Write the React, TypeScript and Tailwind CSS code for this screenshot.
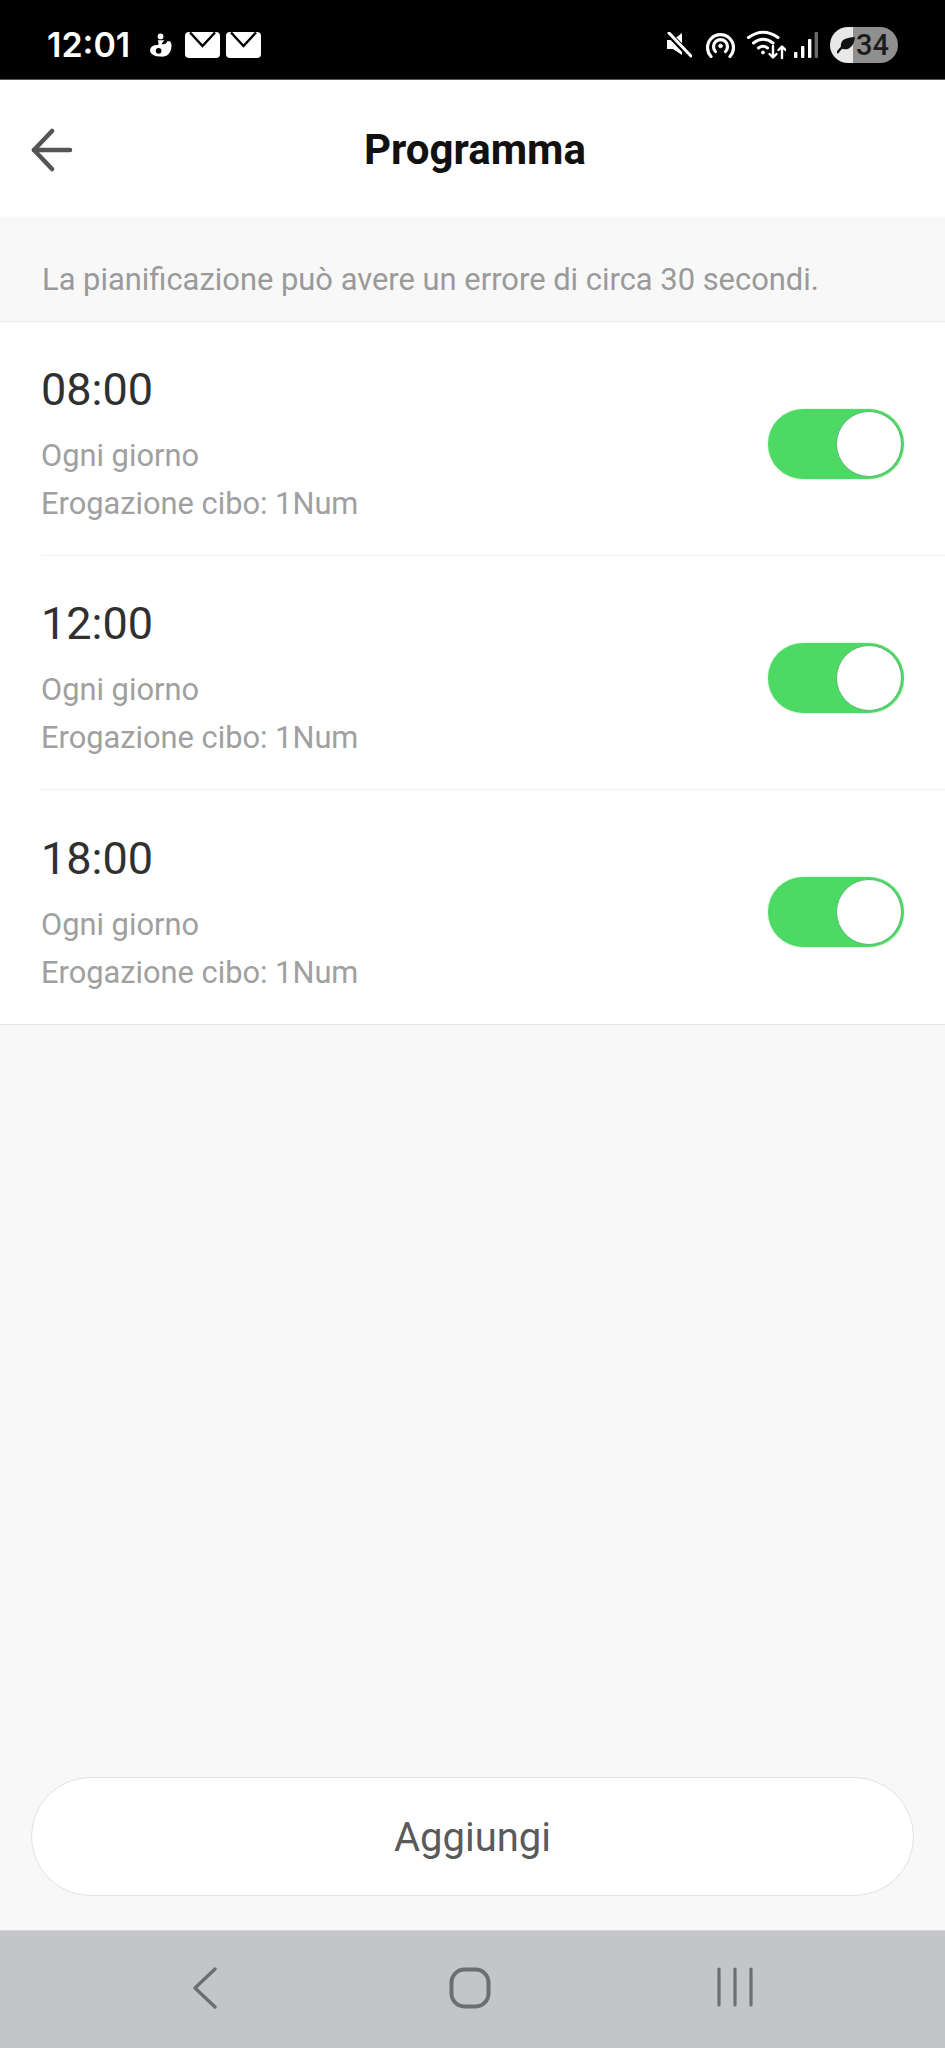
import React from 'react';

const SCHEDULES = ['08:00', '12:00', '18:00'];

function Toggle() {
  return (
    <div className="flex h-[70px] w-[136px] items-center justify-end rounded-full bg-[#4cd964] p-[2px] shadow-[0_0_2px_#4cd96480]">
      <div className="h-[66px] w-[66px] rounded-full border border-[#5cb874] bg-white" />
    </div>
  );
}

function Mail() {
  return (
    <svg width="35" height="26" viewBox="0 0 35 26">
      <rect width="35" height="26" rx="4" fill="#fff" />
      <path d="M5 0.5 L17.5 14 L30 0.5" fill="none" stroke="#000" strokeWidth="2.4" />
    </svg>
  );
}

function StatusBar() {
  return (
    <div className="flex h-[79px] items-center justify-between bg-black pl-[47px] pr-[47px] pt-[11px] [font-family:Inter,sans-serif]">
      <div className="flex items-center">
        <span className="w-[88px] text-[34px] font-semibold leading-none text-white">12:01</span>
        <svg className="ml-[15px]" width="23" height="26" viewBox="0 0 24 26" fill="#fff">
          <circle cx="11" cy="4" r="3" />
          <path d="M8 8 L15 8 L12 12 Q17 13 18 9 L21 9 Q24 14 21 20 Q18 26 11 25 Q1 25 0 19 Q0 13 8 13 Q10 12 8 8 Z" />
          <circle cx="9" cy="19" r="3" fill="#000" />
        </svg>
        <div className="ml-[12px] flex gap-[6px]">
          <Mail />
          <Mail />
        </div>
      </div>
      <div className="flex items-center">
        {/* mute */}
        <svg width="26" height="26" viewBox="0 0 26 26">
          <path d="M1 8 H7 L16 1 V23 L7 17 H1 Z" fill="#fff" />
          <path d="M3 2 L25 25" stroke="#000" strokeWidth="6" />
          <path d="M3 1 L25 24" stroke="#fff" strokeWidth="3" strokeLinecap="round" />
        </svg>
        {/* hotspot */}
        <svg className="ml-[14px]" width="29" height="26" viewBox="0 0 29 26" fill="none" stroke="#fff" strokeWidth="3.2" strokeLinecap="round">
          <path d="M5 24.5 A13 13 0 1 1 24 24.5" />
          <path d="M9.5 19.5 A7 7 0 1 1 19.5 19.5" />
          <circle cx="14.5" cy="14" r="1.8" fill="#fff" strokeWidth="1" />
        </svg>
        {/* wifi with arrows */}
        <svg className="ml-[12px]" width="39" height="30" viewBox="0 0 39 30" fill="none" stroke="#fff" strokeWidth="3" strokeLinecap="round" strokeLinejoin="round">
          <path d="M1.5 7.5 Q16 -3 31 7.5" />
          <path d="M6.5 13 Q16 5.5 26 13" />
          <path d="M11.5 18 Q16 14.5 20.5 18" />
          <circle cx="16" cy="22.5" r="1.5" fill="#fff" strokeWidth="1" />
          <path d="M26 16 V27 M22.5 24 L26 27.5 L29.5 24" strokeWidth="2.4" />
          <path d="M35 28 V17 M31.5 20 L35 16.5 L38.5 20" strokeWidth="2.4" />
        </svg>
        {/* signal */}
        <svg className="ml-[8px]" width="24" height="26" viewBox="0 0 24 26">
          <rect x="0" y="20" width="3.4" height="6" rx="1" fill="#fff" />
          <rect x="7" y="14" width="3.4" height="12" rx="1" fill="#fff" />
          <rect x="14" y="7" width="3.4" height="19" rx="1" fill="#fff" />
          <rect x="20.6" y="0" width="3.4" height="26" rx="1" fill="#6b6b6b" />
        </svg>
        {/* battery */}
        <div className="ml-[12px] flex h-[36px] w-[68px] items-center overflow-hidden rounded-full bg-[linear-gradient(90deg,#e8e8e8_0,#e8e8e8_23px,#8f8f8f_23px,#8f8f8f_100%)] [font-family:Roboto,sans-serif]">
          <svg className="ml-[7px] shrink-0" width="18" height="20" viewBox="0 0 18 20">
            <path d="M18 2 Q17 11 11 14 Q6 15 4 13 Q3 6 8 4 Q13 2 18 2 Z" fill="#111" />
            <path d="M0 18 Q5 12 7 10" stroke="#111" strokeWidth="2.4" fill="none" />
          </svg>
          <span className="ml-[1px] text-[29px] font-medium leading-none text-[#1c1c1c]">34</span>
        </div>
      </div>
    </div>
  );
}

function ScheduleRow({ time, last }: { time: string; last: boolean }) {
  return (
    <div className="flex h-[234px] pl-[41px]">
      <div className={last ? 'flex flex-1 items-center justify-between pr-[41px] pt-[10px]' : 'flex flex-1 items-center justify-between border-b border-[#f1f1f1] pr-[41px] pt-[10px]'}>
        <div className="pt-[5px]">
          <div className="text-[45px] leading-[52px] text-[#303030]">{time}</div>
          <div className="mt-[16px] text-[30.8px] leading-[48px] text-[#a0a0a0]">Ogni giorno</div>
          <div className="text-[30.8px] leading-[48px] text-[#a0a0a0]">Erogazione cibo: 1Num</div>
        </div>
        <Toggle />
      </div>
    </div>
  );
}

export default function App() {
  return (
    <div className="flex h-[2048px] w-[945px] flex-col overflow-hidden bg-[#f8f8f8] [font-family:Roboto,sans-serif]">
      <StatusBar />
      <div className="h-px bg-[#555]" />

      {/* Header */}
      <header className="relative flex h-[137px] items-center justify-center bg-white pl-[5px] pt-[2px]">
        <svg className="absolute left-[31px] top-[48px]" width="42" height="44" viewBox="0 0 42 44" fill="none" stroke="#555" strokeWidth="4.5" strokeLinecap="round" strokeLinejoin="round">
          <path d="M21 3 L3 22 L21 41" />
          <path d="M3 22 H39" />
        </svg>
        <h1 className="text-[42px] font-bold leading-none text-[#111]">Programma</h1>
      </header>

      {/* Hint */}
      <div className="flex h-[105px] items-center border-b border-[#f0f0f0] pl-[42px] pt-[23px] text-[30.9px] text-[#9a9a9a]">
        La pianificazione può avere un errore di circa 30 secondi.
      </div>

      {/* Schedules */}
      <div className="border-b border-[#e6e6e6] bg-white">
        {SCHEDULES.map((time, i) => (
          <ScheduleRow key={time} time={time} last={i === SCHEDULES.length - 1} />
        ))}
      </div>

      {/* Add button */}
      <div className="flex flex-1 items-end px-[31px] pb-[34px]">
        <button className="h-[119px] w-full rounded-full border border-[#e2e2e2] bg-white pt-[2px] text-[40px] text-[#5a5a5a]">
          Aggiungi
        </button>
      </div>

      {/* Android nav bar */}
      <nav className="flex h-[118px] items-center justify-center border-t border-[#d5d6d8] bg-[#c4c5c9] pb-[4px] pr-[5px]">
        <div className="grid grid-cols-[265px_265px_265px] justify-items-center">
          <svg width="26" height="42" viewBox="0 0 26 42" fill="none" stroke="#6d6e72" strokeWidth="3.4" strokeLinecap="round" strokeLinejoin="round">
            <path d="M23 2 L3 21 L23 40" />
          </svg>
          <svg width="42" height="42" viewBox="0 0 42 42" fill="none" stroke="#6d6e72" strokeWidth="4">
            <rect x="2.5" y="2.5" width="37" height="37" rx="13" />
          </svg>
          <svg width="38" height="40" viewBox="0 0 38 40" fill="none" stroke="#6d6e72" strokeWidth="3.2" strokeLinecap="round">
            <path d="M3 2 V38 M19 2 V38 M35 2 V38" />
          </svg>
        </div>
      </nav>
    </div>
  );
}
